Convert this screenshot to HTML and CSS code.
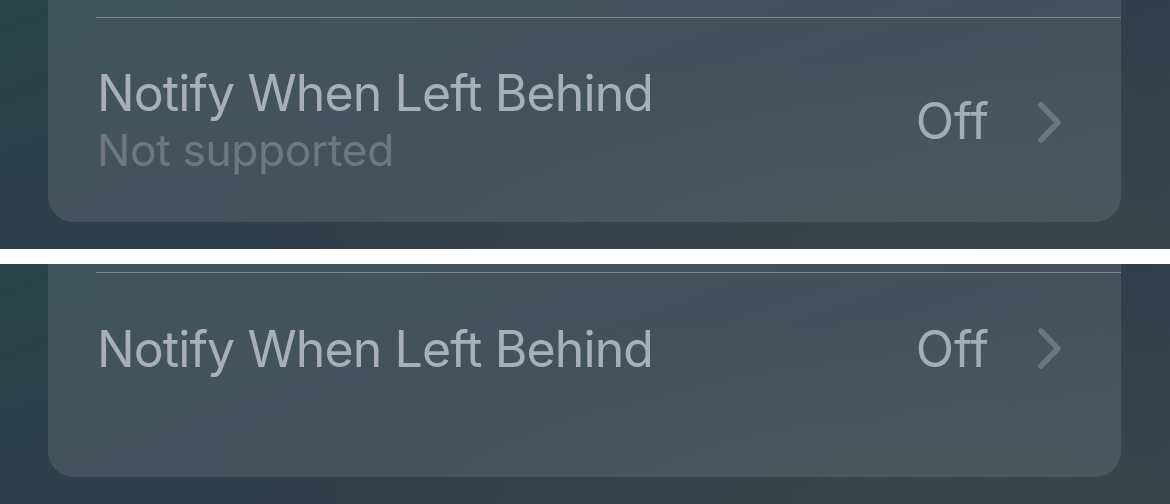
FILE: index.html
```html
<!DOCTYPE html>
<html lang="en">
<head>
    <meta charset="UTF-8">
    <meta name="viewport" content="width=device-width, initial-scale=1.0">
    <title>Notify When Left Behind</title>
    <link rel="stylesheet" href="styles.css">
</head>
<body>
    <!-- Panel 1: row with a subtitle -->
    <div class="panel panel-top">
        <div class="card">
            <div class="divider"></div>
            <div class="row row-sub">
                <div class="label">
                    <div class="title">Notify When Left Behind</div>
                    <div class="subtitle">Not supported</div>
                </div>
                <div class="value">Off</div>
                <svg class="chevron" width="28" height="44" viewBox="0 0 28 44">
                    <polyline points="5,4 22,21.5 5,39" />
                </svg>
            </div>
        </div>
    </div>

    <!-- Panel 2: same row, no subtitle -->
    <div class="panel panel-bottom">
        <div class="card">
            <div class="divider"></div>
            <div class="row row-plain">
                <div class="label">
                    <div class="title">Notify When Left Behind</div>
                </div>
                <div class="value">Off</div>
                <svg class="chevron" width="28" height="44" viewBox="0 0 28 44">
                    <polyline points="5,4 22,21.5 5,39" />
                </svg>
            </div>
        </div>
    </div>
</body>
</html>
```

FILE: styles.css
```css
/* Page */
body {
    margin: 0;
    background: #ffffff;
    font-family: Inter, "Noto Sans", sans-serif;
    display: flex;
    flex-direction: column;
    gap: 15px;
}

/* Blurred wallpaper behind each card */
.panel {
    overflow: hidden;
    background:
        radial-gradient(ellipse at 75% 95%, rgba(70, 80, 60, 0.3), transparent 55%),
        linear-gradient(160deg, #29434a 0%, #2f3d4c 55%, #37434d 100%);
}

.panel-top {
    height: 249px;
}

.panel-bottom {
    height: 240px;
}

/* Grouped card */
.card {
    margin: 0 49px 0 48px;
    background: rgba(155, 160, 172, 0.2);
    border-radius: 0 0 26px 26px;
    box-sizing: border-box;
}

.panel-top .card {
    height: 222px;
    padding-top: 17px;
}

.panel-bottom .card {
    height: 213px;
    padding-top: 8px;
}

.divider {
    height: 1px;
    margin-left: 48px;
    background: rgba(170, 176, 186, 0.55);
}

/* Settings row */
.row {
    display: flex;
    align-items: center;
    padding: 0 57px 0 49px;
}

.row-sub {
    padding-top: 48px;
}

.row-sub .value {
    margin-bottom: 4px;
}

.row-plain {
    padding-top: 47px;
}

.label {
    flex: 1;
}

.title {
    font-size: 50px;
    line-height: 54px;
    color: #a9afb9;
    letter-spacing: -0.9px;
}

.subtitle {
    font-size: 44px;
    line-height: 60px;
    color: #6f7781;
    letter-spacing: -0.2px;
}

.value {
    font-size: 50px;
    line-height: 58px;
    color: #a6acb6;
    margin-right: 47px;
}

.chevron {
    display: block;
}

.chevron polyline {
    fill: none;
    stroke: #6e757e;
    stroke-width: 5.5;
    stroke-linecap: round;
    stroke-linejoin: round;
}
```
